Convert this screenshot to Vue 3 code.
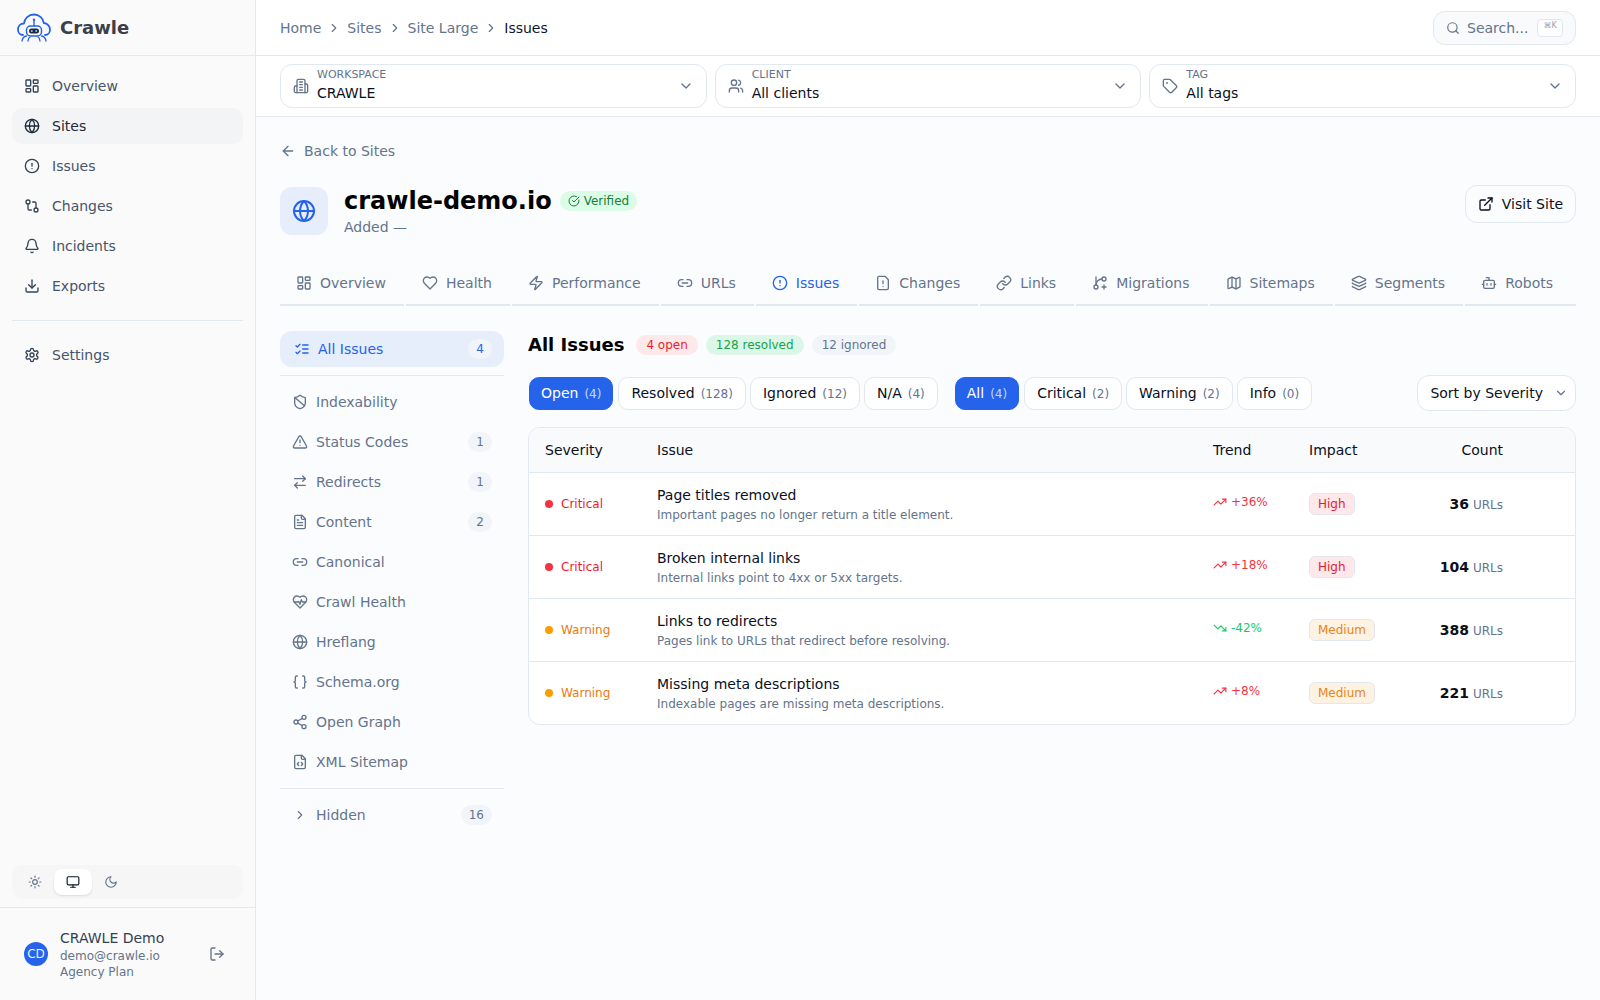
<script setup>
import { h } from 'vue'

const FILE = '<path d="M15 2H6a2 2 0 0 0-2 2v16a2 2 0 0 0 2 2h12a2 2 0 0 0 2-2V7Z"/><path d="M14 2v4a2 2 0 0 0 2 2h4"/>'
const ICONS = {
  dashboard: '<rect width="7" height="9" x="3" y="3" rx="1"/><rect width="7" height="5" x="14" y="3" rx="1"/><rect width="7" height="9" x="14" y="12" rx="1"/><rect width="7" height="5" x="3" y="16" rx="1"/>',
  globe: '<circle cx="12" cy="12" r="10"/><path d="M12 2a14.5 14.5 0 0 0 0 20 14.5 14.5 0 0 0 0-20"/><path d="M2 12h20"/>',
  alert: '<circle cx="12" cy="12" r="10"/><line x1="12" x2="12" y1="8" y2="12"/><line x1="12" x2="12.01" y1="16" y2="16"/>',
  compare: '<circle cx="18" cy="18" r="3"/><circle cx="6" cy="6" r="3"/><path d="M13 6h3a2 2 0 0 1 2 2v7"/><path d="M11 18H8a2 2 0 0 1-2-2V9"/>',
  bell: '<path d="M10.268 21a2 2 0 0 0 3.464 0"/><path d="M3.262 15.326A1 1 0 0 0 4 17h16a1 1 0 0 0 .74-1.673C19.41 13.956 18 12.499 18 8A6 6 0 0 0 6 8c0 4.499-1.411 5.956-2.738 7.326"/>',
  download: '<path d="M21 15v4a2 2 0 0 1-2 2H5a2 2 0 0 1-2-2v-4"/><polyline points="7 10 12 15 17 10"/><line x1="12" x2="12" y1="15" y2="3"/>',
  settings: '<path d="M12.22 2h-.44a2 2 0 0 0-2 2v.18a2 2 0 0 1-1 1.73l-.43.25a2 2 0 0 1-2 0l-.15-.08a2 2 0 0 0-2.73.73l-.22.38a2 2 0 0 0 .73 2.73l.15.1a2 2 0 0 1 1 1.72v.51a2 2 0 0 1-1 1.74l-.15.09a2 2 0 0 0-.73 2.73l.22.38a2 2 0 0 0 2.73.73l.15-.08a2 2 0 0 1 2 0l.43.25a2 2 0 0 1 1 1.73V20a2 2 0 0 0 2 2h.44a2 2 0 0 0 2-2v-.18a2 2 0 0 1 1-1.73l.43-.25a2 2 0 0 1 2 0l.15.08a2 2 0 0 0 2.73-.73l.22-.39a2 2 0 0 0-.73-2.73l-.15-.08a2 2 0 0 1-1-1.74v-.5a2 2 0 0 1 1-1.74l.15-.09a2 2 0 0 0 .73-2.73l-.22-.38a2 2 0 0 0-2.73-.73l-.15.08a2 2 0 0 1-2 0l-.43-.25a2 2 0 0 1-1-1.73V4a2 2 0 0 0-2-2z"/><circle cx="12" cy="12" r="3"/>',
  sun: '<circle cx="12" cy="12" r="4"/><path d="M12 2v2"/><path d="M12 20v2"/><path d="m4.93 4.93 1.41 1.41"/><path d="m17.66 17.66 1.41 1.41"/><path d="M2 12h2"/><path d="M20 12h2"/><path d="m6.34 17.66-1.41 1.41"/><path d="m19.07 4.93-1.41 1.41"/>',
  monitor: '<rect width="20" height="14" x="2" y="3" rx="2"/><line x1="8" x2="16" y1="21" y2="21"/><line x1="12" x2="12" y1="17" y2="21"/>',
  moon: '<path d="M12 3a6 6 0 0 0 9 9 9 9 0 1 1-9-9Z"/>',
  logout: '<path d="M9 21H5a2 2 0 0 1-2-2V5a2 2 0 0 1 2-2h4"/><polyline points="16 17 21 12 16 7"/><line x1="21" x2="9" y1="12" y2="12"/>',
  right: '<path d="m9 18 6-6-6-6"/>',
  down: '<path d="m6 9 6 6 6-6"/>',
  search: '<path d="m21 21-4.34-4.34"/><circle cx="11" cy="11" r="8"/>',
  building: '<path d="M6 22V4a2 2 0 0 1 2-2h8a2 2 0 0 1 2 2v18Z"/><path d="M6 12H4a2 2 0 0 0-2 2v6a2 2 0 0 0 2 2h2"/><path d="M18 9h2a2 2 0 0 1 2 2v9a2 2 0 0 1-2 2h-2"/><path d="M10 6h4"/><path d="M10 10h4"/><path d="M10 14h4"/><path d="M10 18h4"/>',
  users: '<path d="M16 21v-2a4 4 0 0 0-4-4H6a4 4 0 0 0-4 4v2"/><circle cx="9" cy="7" r="4"/><path d="M22 21v-2a4 4 0 0 0-3-3.87"/><path d="M16 3.13a4 4 0 0 1 0 7.75"/>',
  tag: '<path d="M12.586 2.586A2 2 0 0 0 11.172 2H4a2 2 0 0 0-2 2v7.172a2 2 0 0 0 .586 1.414l8.704 8.704a2.426 2.426 0 0 0 3.42 0l6.58-6.58a2.426 2.426 0 0 0 0-3.42z"/><circle cx="7.5" cy="7.5" r=".5" fill="currentColor"/>',
  back: '<path d="m12 19-7-7 7-7"/><path d="M19 12H5"/>',
  external: '<path d="M18 13v6a2 2 0 0 1-2 2H5a2 2 0 0 1-2-2V8a2 2 0 0 1 2-2h6"/><polyline points="15 3 21 3 21 9"/><line x1="10" x2="21" y1="14" y2="3"/>',
  check: '<path d="M21.801 10A10 10 0 1 1 17 3.335"/><path d="m9 11 3 3L22 4"/>',
  heart: '<path d="M19 14c1.49-1.46 3-3.21 3-5.5A5.5 5.5 0 0 0 16.5 3c-1.76 0-3 .5-4.5 2-1.5-1.5-2.74-2-4.5-2A5.5 5.5 0 0 0 2 8.5c0 2.3 1.5 4.05 3 5.5l7 7Z"/>',
  zap: '<path d="M4 14a1 1 0 0 1-.78-1.63l9.9-10.2a.5.5 0 0 1 .86.46l-1.92 6.02A1 1 0 0 0 13 10h7a1 1 0 0 1 .78 1.63l-9.9 10.2a.5.5 0 0 1-.86-.46l1.92-6.02A1 1 0 0 0 11 14z"/>',
  link2: '<path d="M9 17H7A5 5 0 0 1 7 7h2"/><path d="M15 7h2a5 5 0 1 1 0 10h-2"/><line x1="8" x2="16" y1="12" y2="12"/>',
  filewarn: '<path d="M15 2H6a2 2 0 0 0-2 2v16a2 2 0 0 0 2 2h12a2 2 0 0 0 2-2V7Z"/><path d="M12 9v4"/><path d="M12 17h.01"/>',
  link: '<path d="M10 13a5 5 0 0 0 7.54.54l3-3a5 5 0 0 0-7.07-7.07l-1.72 1.71"/><path d="M14 11a5 5 0 0 0-7.54-.54l-3 3a5 5 0 0 0 7.07 7.07l1.71-1.71"/>',
  branch: '<path d="M6 3v12"/><path d="M18 9a3 3 0 1 0 0-6 3 3 0 0 0 0 6z"/><path d="M6 21a3 3 0 1 0 0-6 3 3 0 0 0 0 6z"/><path d="M15 6a9 9 0 0 0-9 9"/><path d="M18 15v6"/><path d="M21 18h-6"/>',
  map: '<path d="M14.106 5.553a2 2 0 0 0 1.788 0l3.659-1.83A1 1 0 0 1 21 4.619v12.764a1 1 0 0 1-.553.894l-4.553 2.277a2 2 0 0 1-1.788 0l-4.212-2.106a2 2 0 0 0-1.788 0l-3.659 1.83A1 1 0 0 1 3 19.381V6.618a1 1 0 0 1 .553-.894l4.553-2.277a2 2 0 0 1 1.788 0z"/><path d="M15 5.764v15"/><path d="M9 3.236v15"/>',
  layers: '<path d="M12.83 2.18a2 2 0 0 0-1.66 0L2.6 6.08a1 1 0 0 0 0 1.83l8.58 3.91a2 2 0 0 0 1.66 0l8.58-3.9a1 1 0 0 0 0-1.83z"/><path d="M2 12a1 1 0 0 0 .58.91l8.6 3.91a2 2 0 0 0 1.65 0l8.58-3.9A1 1 0 0 0 22 12"/><path d="M2 17a1 1 0 0 0 .58.91l8.6 3.91a2 2 0 0 0 1.65 0l8.58-3.9A1 1 0 0 0 22 17"/>',
  bot: '<path d="M12 8V4H8"/><rect width="16" height="12" x="4" y="8" rx="2"/><path d="M2 14h2"/><path d="M20 14h2"/><path d="M15 13v2"/><path d="M9 13v2"/>',
  listchecks: '<path d="m3 17 2 2 4-4"/><path d="m3 7 2 2 4-4"/><path d="M13 6h8"/><path d="M13 12h8"/><path d="M13 18h8"/>',
  shieldban: '<path d="M20 13c0 5-3.5 7.5-7.66 8.95a1 1 0 0 1-.67-.01C7.5 20.5 4 18 4 13V6a1 1 0 0 1 1-1c2 0 4.5-1.2 6.24-2.72a1.17 1.17 0 0 1 1.52 0C14.51 3.81 17 5 19 5a1 1 0 0 1 1 1z"/><path d="m4.243 5.21 14.39 12.472"/>',
  triangle: '<path d="m21.73 18-8-14a2 2 0 0 0-3.48 0l-8 14A2 2 0 0 0 4 21h16a2 2 0 0 0 1.73-3"/><path d="M12 9v4"/><path d="M12 17h.01"/>',
  swap: '<path d="m16 3 4 4-4 4"/><path d="M20 7H4"/><path d="m8 21-4-4 4-4"/><path d="M4 17h16"/>',
  filetext: FILE + '<path d="M10 9H8"/><path d="M16 13H8"/><path d="M16 17H8"/>',
  heartpulse: '<path d="M19 14c1.49-1.46 3-3.21 3-5.5A5.5 5.5 0 0 0 16.5 3c-1.76 0-3 .5-4.5 2-1.5-1.5-2.74-2-4.5-2A5.5 5.5 0 0 0 2 8.5c0 2.3 1.5 4.05 3 5.5l7 7Z"/><path d="M3.22 12H9.5l.5-1 2 4.5 2-7 1.5 3.5h5.27"/>',
  braces: '<path d="M8 3H7a2 2 0 0 0-2 2v5a2 2 0 0 1-2 2 2 2 0 0 1 2 2v5c0 1.1.9 2 2 2h1"/><path d="M16 21h1a2 2 0 0 0 2-2v-5c0-1.1.9-2 2-2a2 2 0 0 1-2-2V5a2 2 0 0 0-2-2h-1"/>',
  share: '<circle cx="18" cy="5" r="3"/><circle cx="6" cy="12" r="3"/><circle cx="18" cy="19" r="3"/><line x1="8.59" x2="15.42" y1="13.51" y2="17.49"/><line x1="15.41" x2="8.59" y1="6.51" y2="10.49"/>',
  filecode: FILE + '<path d="M10 12.5 8 15l2 2.5"/><path d="m14 12.5 2 2.5-2 2.5"/>',
  up: '<polyline points="22 7 13.5 15.5 8.5 10.5 2 17"/><polyline points="16 7 22 7 22 13"/>',
  downtrend: '<polyline points="22 17 13.5 8.5 8.5 13.5 2 7"/><polyline points="16 17 22 17 22 11"/>'
}

const Icon = (props) => h('svg', {
  width: props.size || 16,
  height: props.size || 16,
  viewBox: '0 0 24 24',
  fill: 'none',
  stroke: 'currentColor',
  'stroke-width': 2,
  'stroke-linecap': 'round',
  'stroke-linejoin': 'round',
  innerHTML: ICONS[props.name]
})
Icon.props = ['name', 'size']

const nav = [
  { icon: 'dashboard', label: 'Overview' },
  { icon: 'globe', label: 'Sites', active: true },
  { icon: 'alert', label: 'Issues' },
  { icon: 'compare', label: 'Changes' },
  { icon: 'bell', label: 'Incidents' },
  { icon: 'download', label: 'Exports' }
]
const crumbs = ['Home', 'Sites', 'Site Large']
const selects = [
  { icon: 'building', label: 'Workspace', value: 'CRAWLE' },
  { icon: 'users', label: 'Client', value: 'All clients' },
  { icon: 'tag', label: 'Tag', value: 'All tags' }
]
const tabs = [
  { icon: 'dashboard', label: 'Overview' },
  { icon: 'heart', label: 'Health' },
  { icon: 'zap', label: 'Performance' },
  { icon: 'link2', label: 'URLs' },
  { icon: 'alert', label: 'Issues', active: true },
  { icon: 'filewarn', label: 'Changes' },
  { icon: 'link', label: 'Links' },
  { icon: 'branch', label: 'Migrations' },
  { icon: 'map', label: 'Sitemaps' },
  { icon: 'layers', label: 'Segments' },
  { icon: 'bot', label: 'Robots' }
]
const cats = [
  { icon: 'shieldban', label: 'Indexability' },
  { icon: 'triangle', label: 'Status Codes', count: 1 },
  { icon: 'swap', label: 'Redirects', count: 1 },
  { icon: 'filetext', label: 'Content', count: 2 },
  { icon: 'link2', label: 'Canonical' },
  { icon: 'heartpulse', label: 'Crawl Health' },
  { icon: 'globe', label: 'Hreflang' },
  { icon: 'braces', label: 'Schema.org' },
  { icon: 'share', label: 'Open Graph' },
  { icon: 'filecode', label: 'XML Sitemap' }
]
const statusPills = [
  { label: 'Open', count: 4, active: true },
  { label: 'Resolved', count: 128 },
  { label: 'Ignored', count: 12 },
  { label: 'N/A', count: 4 }
]
const severityPills = [
  { label: 'All', count: 4, active: true },
  { label: 'Critical', count: 2 },
  { label: 'Warning', count: 2 },
  { label: 'Info', count: 0 }
]
const rows = [
  { sev: 'Critical', title: 'Page titles removed', desc: 'Important pages no longer return a title element.', trend: '+36%', up: true, impact: 'High', count: 36 },
  { sev: 'Critical', title: 'Broken internal links', desc: 'Internal links point to 4xx or 5xx targets.', trend: '+18%', up: true, impact: 'High', count: 104 },
  { sev: 'Warning', title: 'Links to redirects', desc: 'Pages link to URLs that redirect before resolving.', trend: '-42%', up: false, impact: 'Medium', count: 388 },
  { sev: 'Warning', title: 'Missing meta descriptions', desc: 'Indexable pages are missing meta descriptions.', trend: '+8%', up: true, impact: 'Medium', count: 221 }
]
</script>

<template>
  <div class="app">
    <aside class="side">
      <div class="brand">
        <svg class="logo" width="34" height="29" viewBox="0 0 34 29" fill="none" stroke-linecap="round" stroke-linejoin="round">
          <path d="M6 22C3 22 1 19.500 1 16.500 1 13 3.600 10.500 7 10.500 7.500 5.500 11.500 1.500 17 1.500c5 0 9 3.500 9.800 8.500C30.300 10.200 33 13 33 16.500c0 3-2 5.500-5 5.500" stroke="#2563eb" stroke-width="1.800"/>
          <path d="M17 7.500V13" stroke="#2563eb" stroke-width="1.400"/>
          <circle cx="17" cy="6.800" r="1.200" fill="#2563eb"/>
          <rect x="9.500" y="13" width="15" height="10" rx="4" stroke="#2563eb" stroke-width="1.500"/>
          <rect x="12" y="15.500" width="10" height="5" rx="2.500" fill="#1e293b"/>
          <circle cx="14.800" cy="18" r="1" fill="#93c5fd"/>
          <circle cx="19.200" cy="18" r="1" fill="#93c5fd"/>
          <path d="M9.500 23c-2.500.3-4 2-4.500 5M24.500 23c2.500.3 4 2 4.500 5M13 24c-1.200.5-1.800 2-2 4M21 24c1.200.5 1.800 2 2 4" stroke="#2563eb" stroke-width="1.300"/>
        </svg>
        <span class="brand-name">Crawle</span>
      </div>
      <nav class="nav">
        <a v-for="n in nav" :key="n.label" class="nav-item" :class="{ active: n.active }">
          <Icon :name="n.icon" />
          <span>{{ n.label }}</span>
        </a>
        <div class="nav-div"></div>
        <a class="nav-item"><Icon name="settings" /><span>Settings</span></a>
      </nav>
      <div class="theme">
        <button class="theme-btn"><Icon name="sun" :size="14" /></button>
        <button class="theme-btn on"><Icon name="monitor" :size="14" /></button>
        <button class="theme-btn"><Icon name="moon" :size="14" /></button>
      </div>
      <div class="user">
        <span class="avatar">CD</span>
        <div class="user-text">
          <div class="user-name">CRAWLE Demo</div>
          <div class="user-sub">demo@crawle.io</div>
          <div class="user-sub">Agency Plan</div>
        </div>
        <span class="logout"><Icon name="logout" /></span>
      </div>
    </aside>

    <div class="main">
      <header class="top">
        <div class="crumbs">
          <template v-for="c in crumbs" :key="c">
            <span>{{ c }}</span>
            <Icon name="right" :size="14" />
          </template>
          <span class="crumb-last">Issues</span>
        </div>
        <div class="search">
          <Icon name="search" :size="14" />
          <span class="search-text">Search...</span>
          <kbd class="kbd">⌘K</kbd>
        </div>
      </header>

      <div class="filters">
        <div v-for="s in selects" :key="s.label" class="select">
          <Icon :name="s.icon" class="select-icon" />
          <div class="select-text">
            <div class="select-label">{{ s.label }}</div>
            <div class="select-value">{{ s.value }}</div>
          </div>
          <Icon name="down" class="select-chev" />
        </div>
      </div>

      <main class="content">
        <a class="back"><Icon name="back" /><span>Back to Sites</span></a>

        <div class="site">
          <div class="site-icon"><Icon name="globe" :size="24" /></div>
          <div class="site-info">
            <div class="site-line">
              <h1 class="site-title">crawle-demo.io</h1>
              <span class="verified"><Icon name="check" :size="12" />Verified</span>
            </div>
            <div class="site-added">Added —</div>
          </div>
          <button class="visit"><Icon name="external" />Visit Site</button>
        </div>

        <div class="tabs">
          <a v-for="t in tabs" :key="t.label" class="tab" :class="{ active: t.active }">
            <Icon :name="t.icon" />
            <span>{{ t.label }}</span>
          </a>
        </div>

        <div class="split">
          <div class="cats">
            <a class="cat cat-on">
              <Icon name="listchecks" />
              <span class="cat-label">All Issues</span>
              <span class="cat-count">4</span>
            </a>
            <div class="cat-div"></div>
            <a v-for="c in cats" :key="c.label" class="cat">
              <Icon :name="c.icon" />
              <span class="cat-label">{{ c.label }}</span>
              <span v-if="c.count" class="cat-count">{{ c.count }}</span>
            </a>
            <div class="cat-div"></div>
            <a class="cat">
              <Icon name="right" :size="14" class="cat-chev" />
              <span class="cat-label">Hidden</span>
              <span class="cat-count">16</span>
            </a>
          </div>

          <div class="issues">
            <div class="issues-head">
              <h2 class="issues-title">All Issues</h2>
              <span class="chip chip-red">4 open</span>
              <span class="chip chip-green">128 resolved</span>
              <span class="chip chip-gray">12 ignored</span>
            </div>

            <div class="toolbar">
              <div class="pills pills-status">
                <button v-for="p in statusPills" :key="p.label" class="pill" :class="{ on: p.active }">
                  {{ p.label }}<span class="pill-n">({{ p.count }})</span>
                </button>
              </div>
              <div class="pills pills-sev">
                <button v-for="p in severityPills" :key="p.label" class="pill" :class="{ on: p.active }">
                  {{ p.label }}<span class="pill-n">({{ p.count }})</span>
                </button>
              </div>
              <button class="sort">Sort by Severity<Icon name="down" :size="14" class="sort-chev" /></button>
            </div>

            <div class="table">
              <div class="tr thead">
                <div class="td">Severity</div>
                <div class="td">Issue</div>
                <div class="td">Trend</div>
                <div class="td">Impact</div>
                <div class="td td-right">Count</div>
              </div>
              <div v-for="r in rows" :key="r.title" class="tr row">
                <div class="td sev" :class="r.sev === 'Critical' ? 'sev-crit' : 'sev-warn'">
                  <span class="dot"></span>{{ r.sev }}
                </div>
                <div class="td">
                  <div class="row-title">{{ r.title }}</div>
                  <div class="row-desc">{{ r.desc }}</div>
                </div>
                <div class="td trend" :class="r.up ? 'trend-up' : 'trend-down'">
                  <Icon :name="r.up ? 'up' : 'downtrend'" :size="14" />{{ r.trend }}
                </div>
                <div class="td">
                  <span class="impact" :class="r.impact === 'High' ? 'imp-high' : 'imp-med'">{{ r.impact }}</span>
                </div>
                <div class="td td-right">
                  <b class="num">{{ r.count }}</b><span class="urls">URLs</span>
                </div>
              </div>
            </div>
          </div>
        </div>
      </main>
    </div>
  </div>
</template>

<style>
html, body { margin: 0; padding: 0; background: #fbfcfe; }
* { box-sizing: border-box; }
</style>

<style scoped>
.app {
  display: flex;
  height: 100vh;
  overflow: hidden;
  font-family: "DejaVu Sans", sans-serif;
  font-size: 14px;
  line-height: 20px;
  color: #0a0f1c;
}
svg { flex: none; display: block; }
a { display: flex; }
button { font: inherit; color: inherit; cursor: pointer; }

/* sidebar */
.side {
  width: 256px;
  flex: none;
  display: flex;
  flex-direction: column;
  background: #fafafa;
  border-right: 1px solid #e2e8f0;
}
.brand {
  height: 56px;
  flex: none;
  display: flex;
  align-items: center;
  gap: 9px;
  padding: 0 17px;
  border-bottom: 1px solid #e2e8f0;
}
.brand-name { font-size: 18px; font-weight: 700; color: #3a3f4a; }
.nav { flex: 1; padding: 12px; display: flex; flex-direction: column; gap: 4px; }
.nav-item {
  height: 36px;
  display: flex;
  align-items: center;
  gap: 12px;
  padding: 0 12px;
  border-radius: 10px;
  color: #475569;
}
.nav-item svg { color: #334155; }
.nav-item.active { background: #f3f4f6; color: #1e293b; }
.nav-item.active svg { color: #1e293b; }
.nav-div { height: 1px; background: #e2e8f0; margin: 12px 0; }
.theme {
  margin: 0 12px 8px;
  height: 34px;
  padding: 4px;
  display: flex;
  background: #f6f6f6;
  border-radius: 10px;
}
.theme-btn {
  width: 38px;
  height: 26px;
  display: flex;
  align-items: center;
  justify-content: center;
  border: 0;
  border-radius: 8px;
  background: transparent;
  color: #64748b;
  padding: 0;
}
.theme-btn.on { background: #fff; color: #0f172a; box-shadow: 0 1px 2px rgba(15, 23, 42, 0.12); }
.user {
  height: 93px;
  flex: none;
  display: flex;
  align-items: center;
  gap: 12px;
  padding: 0 30px 0 24px;
  border-top: 1px solid #e2e8f0;
}
.avatar {
  width: 24px;
  height: 24px;
  flex: none;
  border-radius: 50%;
  background: #2563eb;
  color: #eaf1ff;
  font-size: 12px;
  display: flex;
  align-items: center;
  justify-content: center;
}
.user-text { flex: 1; min-width: 0; }
.user-name { color: #334155; }
.user-sub { font-size: 12px; line-height: 16px; color: #64748b; }
.logout { color: #64748b; }

/* top */
.main { flex: 1; min-width: 0; display: flex; flex-direction: column; }
.top {
  height: 56px;
  flex: none;
  display: flex;
  align-items: center;
  justify-content: space-between;
  padding: 0 24px;
  background: #fff;
  border-bottom: 1px solid #e2e8f0;
}
.crumbs { display: flex; align-items: center; gap: 6px; color: #64748b; }
.crumb-last { color: #0f172a; }
.search {
  width: 143px;
  height: 34px;
  display: flex;
  align-items: center;
  padding: 0 12px;
  gap: 7px;
  background: #f8fafc;
  border: 1px solid #e2e8f0;
  border-radius: 12px;
  color: #64748b;
}
.search-text { flex: 1; white-space: nowrap; }
.kbd {
  width: 26px;
  height: 18px;
  flex: none;
  background: #fff;
  border: 1px solid #e2e8f0;
  border-radius: 4px;
  font: 8px/11px "DejaVu Sans", sans-serif;
  color: #94a3b8;
  text-align: center;
  overflow: hidden;
}
.filters {
  flex: none;
  display: grid;
  grid-template-columns: repeat(3, 1fr);
  gap: 8px;
  padding: 8px 24px;
  background: #fff;
  border-bottom: 1px solid #e2e8f0;
}
.select {
  height: 44px;
  display: flex;
  align-items: center;
  gap: 8px;
  padding: 0 12px;
  border: 1px solid #e2e8f0;
  border-radius: 12px;
  background: #fff;
}
.select-icon { color: #64748b; }
.select-text { flex: 1; min-width: 0; padding-bottom: 2px; }
.select-label { font-size: 11px; line-height: 16px; text-transform: uppercase; color: #64748b; }
.select-value { line-height: 20px; }
.select-chev { color: #64748b; }

/* content */
.content { flex: 1; min-height: 0; padding: 24px; display: flex; flex-direction: column; }
.back { align-items: center; gap: 8px; color: #64748b; height: 20px; }
.site { margin-top: 26px; display: flex; align-items: flex-start; gap: 16px; height: 48px; }
.site-icon {
  width: 48px;
  height: 48px;
  flex: none;
  display: flex;
  align-items: center;
  justify-content: center;
  background: #e6edfb;
  border-radius: 12px;
  color: #2563eb;
}
.site-info { flex: 1; min-width: 0; }
.site-line { display: flex; align-items: center; gap: 8px; height: 30px; margin-top: -1px; }
.site-title { margin: 0; font-size: 24px; line-height: 30px; font-weight: 700; color: #000; }
.verified {
  height: 20px;
  display: flex;
  align-items: center;
  gap: 4px;
  padding: 0 8px;
  background: #dcfce7;
  border-radius: 10px;
  font-size: 12px;
  color: #15803d;
}
.site-added { color: #64748b; line-height: 20px; margin-top: 1px; }
.visit {
  height: 38px;
  display: flex;
  align-items: center;
  gap: 8px;
  padding: 0 12px;
  border: 1px solid #e2e8f0;
  border-radius: 12px;
  background: #fbfcfe;
  margin-top: -2px;
}
.tabs { display: flex; gap: 2px; margin-top: 24px; flex: none; }
.tab {
  flex: 1 1 auto;
  height: 47px;
  display: flex;
  align-items: center;
  gap: 8px;
  padding: 2px 16px 0;
  border-bottom: 2px solid #e2e8f0;
  color: #64748b;
  white-space: nowrap;
}
.tab:last-child { padding-right: 21px; }
.tab.active { color: #2563eb; }

.split { margin-top: 25px; display: flex; gap: 24px; }
.cats { width: 224px; flex: none; display: flex; flex-direction: column; gap: 4px; }
.cat {
  height: 36px;
  display: flex;
  align-items: center;
  gap: 8px;
  padding: 0 12px;
  border-radius: 10px;
  color: #64748b;
}
.cat-on { background: #e6edfb; color: #2563eb; padding-left: 14px; border-radius: 12px; }
.cat-label { flex: 1; }
.cat-count {
  min-width: 24px;
  height: 20px;
  padding: 0 8px;
  border-radius: 10px;
  background: #f1f5f9;
  font-size: 12px;
  line-height: 20px;
  text-align: center;
  color: #64748b;
}
.cat-on .cat-count { color: #2563eb; background: #f1f5f9; }
.cat-chev { margin: 0 1px; }
.cat-div { height: 1px; background: #e2e8f0; margin: 4px 0; }

.issues { flex: 1; min-width: 0; }
.issues-head { display: flex; align-items: center; gap: 8px; height: 28px; }
.issues-title { margin: 0 4px 0 0; font-size: 18px; line-height: 28px; font-weight: 700; color: #000; }
.chip { height: 20px; padding: 0 10px; border-radius: 10px; font-size: 12px; line-height: 20px; }
.chip-red { background: #fde8ea; color: #ef1a2c; }
.chip-green { background: #dcf7e8; color: #16a34a; }
.chip-gray { background: #f1f5f9; color: #64748b; }

.toolbar { margin-top: 16px; display: flex; align-items: center; gap: 17px; height: 36px; }
.pills { display: flex; gap: 4px; }
.pill {
  height: 33px;
  padding: 0 12px;
  border: 1px solid #e2e8f0;
  border-radius: 10px;
  background: #fff;
  white-space: nowrap;
}
.pill-n { font-size: 12px; margin-left: 6px; color: #64748b; }
.pill.on { background: #2563eb; border-color: #2563eb; color: #fff; padding: 0 11px; }
.pills-status .pill.on { margin: 0 1px; }
.pills-sev .pill.on { margin-right: 1px; }
.pill.on .pill-n { color: #bfdbfe; }
.sort {
  margin-left: auto;
  height: 36px;
  display: flex;
  align-items: center;
  gap: 11px;
  padding: 0 7px 0 12px;
  border: 1px solid #e2e8f0;
  border-radius: 12px;
  background: #fff;
}
.sort-chev { color: #64748b; }

.table {
  margin-top: 16px;
  border: 1px solid #e2e8f0;
  border-radius: 12px;
  background: #fff;
  overflow: hidden;
}
.tr {
  display: grid;
  grid-template-columns: 112px 1fr 96px 96px 130px 56px;
  align-items: center;
  border-bottom: 1px solid #e2e8f0;
}
.tr:last-child { border-bottom: 0; height: 62px; }
.thead { height: 45px; background: #f8fafc; }
.row { height: 63px; }
.td { padding: 0 16px; }
.td-right { text-align: right; white-space: nowrap; }
.sev { display: flex; align-items: center; gap: 8px; font-size: 12px; }
.dot { width: 8px; height: 8px; border-radius: 50%; flex: none; }
.sev-crit { color: #ef1a2c; }
.sev-crit .dot { background: #f5333f; }
.sev-warn { color: #ea7a10; }
.sev-warn .dot { background: #ff9c00; }
.row-title { line-height: 20px; }
.row-desc { font-size: 12px; line-height: 16px; color: #64748b; margin-top: 2px; }
.trend { display: flex; align-items: center; gap: 4px; font-size: 12px; margin-top: -5px; }
.trend-up { color: #f5333f; }
.trend-down { color: #16c964; }
.impact {
  display: inline-block;
  height: 22px;
  padding: 0 8px;
  border: 1px solid #e2e8f0;
  border-radius: 6px;
  font-size: 12px;
  line-height: 20px;
  vertical-align: middle;
}
.imp-high { background: #fee8ea; color: #e11d2e; }
.imp-med { background: #fef3e2; color: #e88420; }
.num { font-weight: 700; color: #0a0f1c; }
.urls { font-size: 12px; color: #64748b; margin-left: 4px; }
</style>
